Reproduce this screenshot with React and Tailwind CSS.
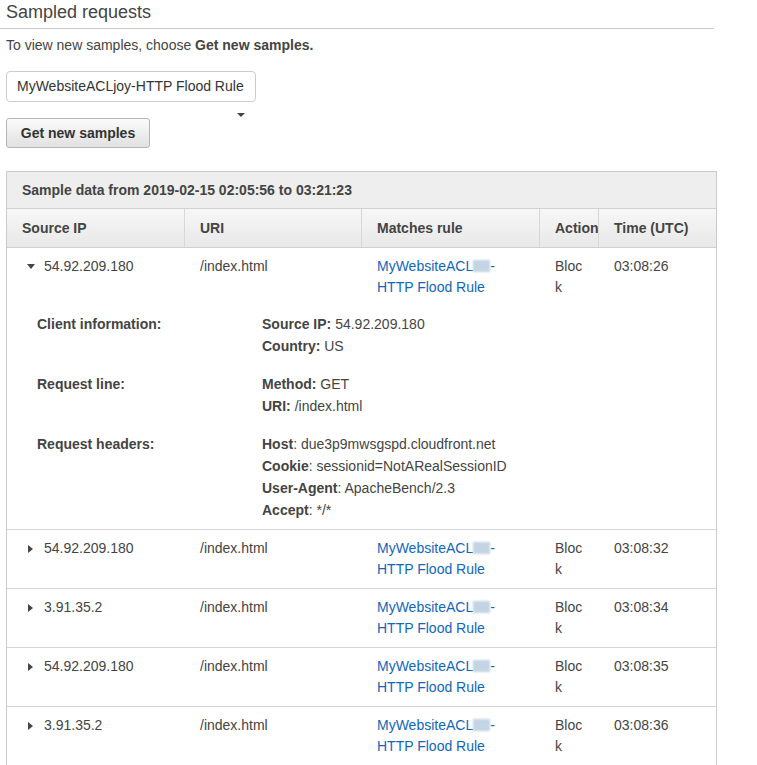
import React from "react";

const rows = [
  { ip: "54.92.209.180", time: "03:08:32" },
  { ip: "3.91.35.2", time: "03:08:34" },
  { ip: "54.92.209.180", time: "03:08:35" },
  { ip: "3.91.35.2", time: "03:08:36" },
];

const Blur = () => (
  <span className="inline-block h-[12px] w-[17px] align-[-1px] bg-[#c3d4e4] blur-[1px]" />
);

const RuleLink = () => (
  <span className="text-[#1166bb]">
    MyWebsiteACL
    <Blur />
    -<br />
    HTTP Flood Rule
  </span>
);

const TriRight = () => (
  <span className="mr-[11px] inline-block h-0 w-0 border-y-[4px] border-l-[5px] border-y-transparent border-l-[#444]" />
);

const TriDown = () => (
  <span className="mr-[9px] inline-block h-0 w-0 border-x-[4px] border-t-[5px] border-x-transparent border-t-[#444]" />
);

const Detail = ({ label, lines }) => (
  <div className="grid grid-cols-[225px_1fr]">
    <div className="font-bold">{label}</div>
    <div>
      {lines.map(([k, v]) => (
        <div key={k}>
          <span className="font-bold">{k}</span>
          {v}
        </div>
      ))}
    </div>
  </div>
);

const cols = "grid grid-cols-[177px_177px_178px_59px_118px]";

export default function App() {
  return (
    <div className="min-h-[765px] w-[757px] bg-white font-['Liberation_Sans',Arial,sans-serif] text-[14px] text-[#444]">
      <div className="w-[714px] border-b border-[#cccccc] pb-[4px] pl-[6px] text-[18px] leading-[24px]">
        Sampled requests
      </div>

      <div className="pl-[6px]">
        <p className="mt-[6px] leading-[20px]">
          To view new samples, choose <b>Get new samples.</b>
        </p>

        <div className="mt-[16px] flex h-[31px] w-[250px] items-center rounded-[4px] border border-[#cccccc] pl-[10px] text-[#333]">
          MyWebsiteACLjoy-HTTP Flood Rule
        </div>
        <div className="flex h-[16px] items-end pb-[1px] pl-[231px]">
          <span className="inline-block h-0 w-0 border-x-[4px] border-t-[4px] border-x-transparent border-t-[#444]" />
        </div>

        <button className="flex h-[30px] w-[144px] items-center justify-center rounded-[3px] border border-[#b5b5b5] bg-gradient-to-b from-[#fbfbfb] to-[#e1e1e1] font-bold text-[#333]">
          Get new samples
        </button>

        {/* sampled requests table */}
        <div className="mt-[23px] w-[711px] border border-[#cacaca]">
          <div className="flex h-[37px] items-center border-b border-[#d0d0d0] bg-[#eeeeee] pl-[15px] font-bold">
            Sample data from 2019-02-15 02:05:56 to 03:21:23
          </div>

          <div className={`${cols} h-[39px] border-b border-[#cfcfcf] bg-gradient-to-b from-[#f7f7f7] to-[#e8e8e8] font-bold`}>
            <div className="flex items-center pl-[15px]">Source IP</div>
            <div className="flex items-center border-l border-[#d8d8d8] pl-[15px]">URI</div>
            <div className="flex items-center border-l border-[#d8d8d8] pl-[15px]">Matches rule</div>
            <div className="flex items-center whitespace-nowrap border-l border-[#d8d8d8] pl-[15px]">Action</div>
            <div className="flex items-center border-l border-[#d8d8d8] pl-[15px]">Time (UTC)</div>
          </div>

          {/* expanded row */}
          <div className="border-b border-[#d5d5d5] pb-[8px] pt-[8px] leading-[21px]">
            <div className={cols}>
              <div className="flex h-[21px] items-center pl-[20px]">
                <TriDown />
                54.92.209.180
              </div>
              <div className="pl-[16px]">/index.html</div>
              <div className="pl-[16px]">
                <RuleLink />
              </div>
              <div className="break-all pl-[16px] pr-[12px]">Block</div>
              <div className="pl-[16px]">03:08:26</div>
            </div>

            <div className="mt-[15px] flex flex-col gap-[16px] pl-[30px] leading-[22px]">
              <Detail
                label="Client information:"
                lines={[
                  ["Source IP:", " 54.92.209.180"],
                  ["Country:", " US"],
                ]}
              />
              <Detail
                label="Request line:"
                lines={[
                  ["Method:", " GET"],
                  ["URI:", " /index.html"],
                ]}
              />
              <Detail
                label="Request headers:"
                lines={[
                  ["Host", ": due3p9mwsgspd.cloudfront.net"],
                  ["Cookie", ": sessionid=NotARealSessionID"],
                  ["User-Agent", ": ApacheBench/2.3"],
                  ["Accept", ": */*"],
                ]}
              />
            </div>
          </div>

          {rows.map((r, i) => (
            <div key={i} className={`${cols} border-b border-[#d5d5d5] pb-[8px] pt-[8px] leading-[21px]`}>
              <div className="flex h-[21px] items-center pl-[21px]">
                <TriRight />
                {r.ip}
              </div>
              <div className="pl-[16px]">/index.html</div>
              <div className="pl-[16px]">
                <RuleLink />
              </div>
              <div className="break-all pl-[16px] pr-[12px]">Block</div>
              <div className="pl-[16px]">{r.time}</div>
            </div>
          ))}
        </div>
      </div>
    </div>
  );
}
